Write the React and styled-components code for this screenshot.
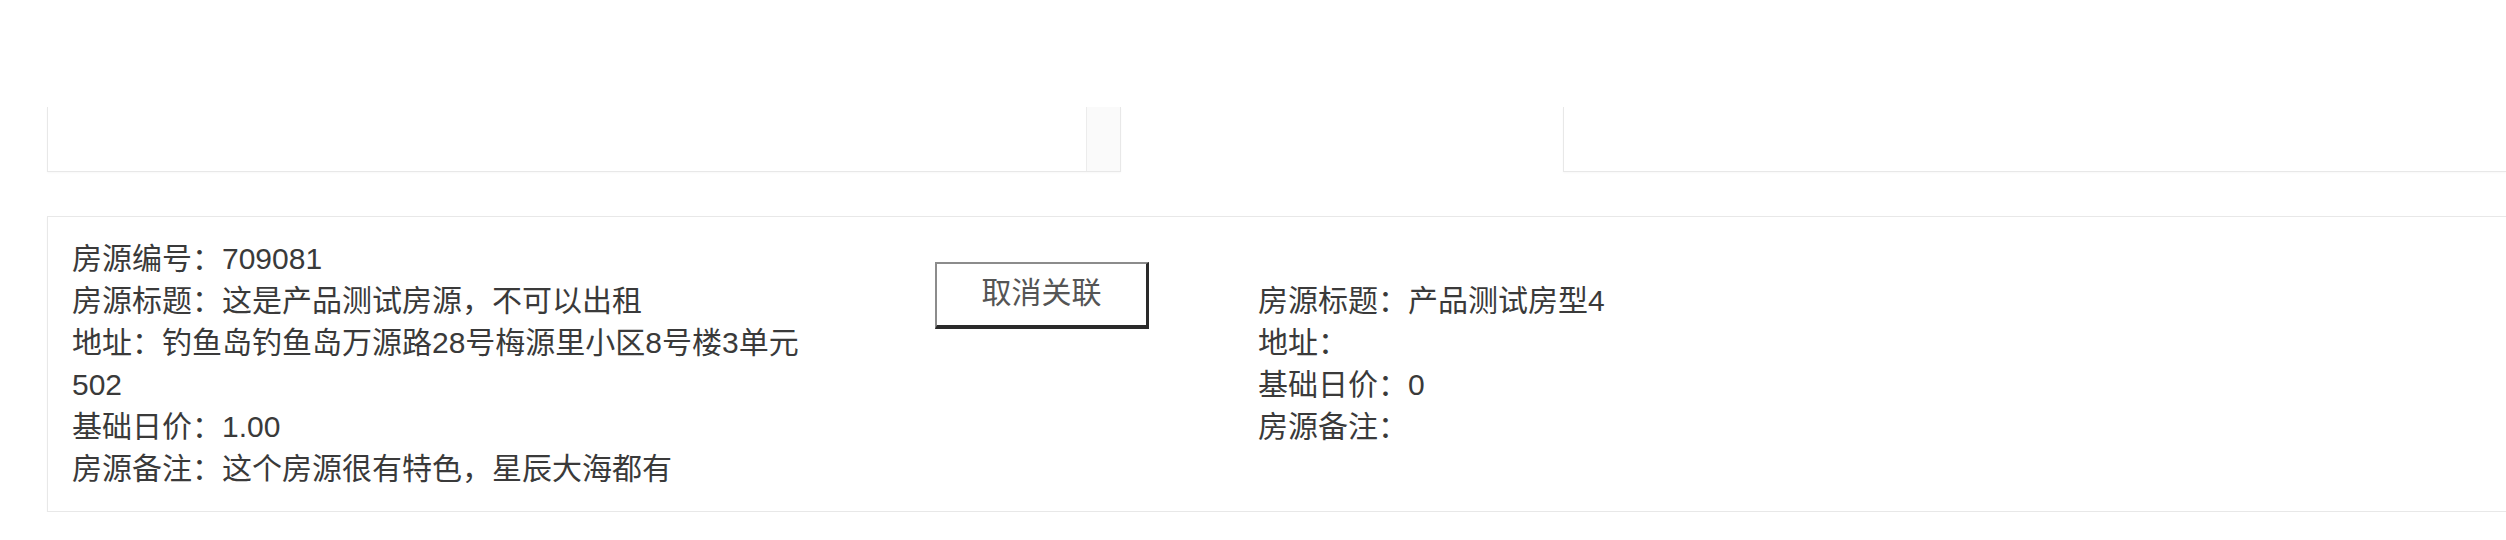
import React from "react";
import styled, { createGlobalStyle } from "styled-components";

const GlobalStyle = createGlobalStyle`
  body {
    margin: 0;
    background: #fff;
    font-family: "Liberation Sans", "Noto Sans CJK SC", sans-serif;
    overflow: hidden;
  }
`;

const Page = styled.div`
  padding: 107px 0 0 47px;
  width: 2506px;
  box-sizing: border-box;
`;

const TopRow = styled.div`
  display: flex;
  height: 65px;
`;

const Panel = styled.div`
  box-sizing: border-box;
  height: 100%;
  border-left: 1px solid #e8e8e8;
  border-bottom: 1px solid #e8e8e8;
  box-shadow: 0 1px 2px rgba(0, 0, 0, 0.03);
`;

const LeftPanel = styled(Panel)`
  width: 1074px;
  display: flex;
  justify-content: flex-end;
`;

const RightPanel = styled(Panel)`
  flex: 1;
  margin-left: 442px;
`;

const ScrollStrip = styled.div`
  width: 33px;
  height: 100%;
  background: #fafafa;
  border-left: 1px solid #ececec;
  border-right: 1px solid #e8e8e8;
`;

const Card = styled.div`
  margin-top: 44px;
  display: flex;
  align-items: center;
  padding: 21px 24px;
  border: 1px solid #e8e8e8;
  border-right: none;
  box-shadow: 0 1px 2px rgba(0, 0, 0, 0.03);
  color: #3a3a3a;
  font-size: 30px;
  line-height: 42px;
`;

const InfoColumn = styled.div`
  width: ${(p) => p.width}px;
  flex-shrink: 0;
`;

const Line = styled.div`
  word-break: normal;
  line-break: strict;
`;

const ButtonCell = styled.div`
  align-self: flex-start;
  margin: 24px 109px 0 111px;
`;

const UnlinkButton = styled.button`
  width: 214px;
  height: 67px;
  box-sizing: border-box;
  background: #fff;
  color: #555;
  font-family: "Liberation Sans", "Noto Sans CJK SC", sans-serif;
  font-size: 30px;
  line-height: 1;
  border-top: 2px solid #8c8c8c;
  border-left: 2px solid #8c8c8c;
  border-right: 3px solid #2a2a2a;
  border-bottom: 4px solid #2a2a2a;
  padding: 0 0 4px;
  cursor: pointer;
`;

const source = [
  "房源编号：709081",
  "房源标题：这是产品测试房源，不可以出租",
  "地址：钓鱼岛钓鱼岛万源路28号梅源里小区8号楼3单元502",
  "基础日价：1.00",
  "房源备注：这个房源很有特色，星辰大海都有",
];

const target = [
  "房源标题：产品测试房型4",
  "地址：",
  "基础日价：0",
  "房源备注：",
];

const App = () => {
  return (
    <>
      <GlobalStyle />
      <Page>
        <TopRow>
          <LeftPanel>
            <ScrollStrip />
          </LeftPanel>
          <RightPanel />
        </TopRow>
        <Card>
          <InfoColumn width={752}>
            {source.map((t) => (
              <Line key={t}>{t}</Line>
            ))}
          </InfoColumn>
          <ButtonCell>
            <UnlinkButton>取消关联</UnlinkButton>
          </ButtonCell>
          <InfoColumn width={600}>
            {target.map((t) => (
              <Line key={t}>{t}</Line>
            ))}
          </InfoColumn>
        </Card>
      </Page>
    </>
  );
};

export default App;
